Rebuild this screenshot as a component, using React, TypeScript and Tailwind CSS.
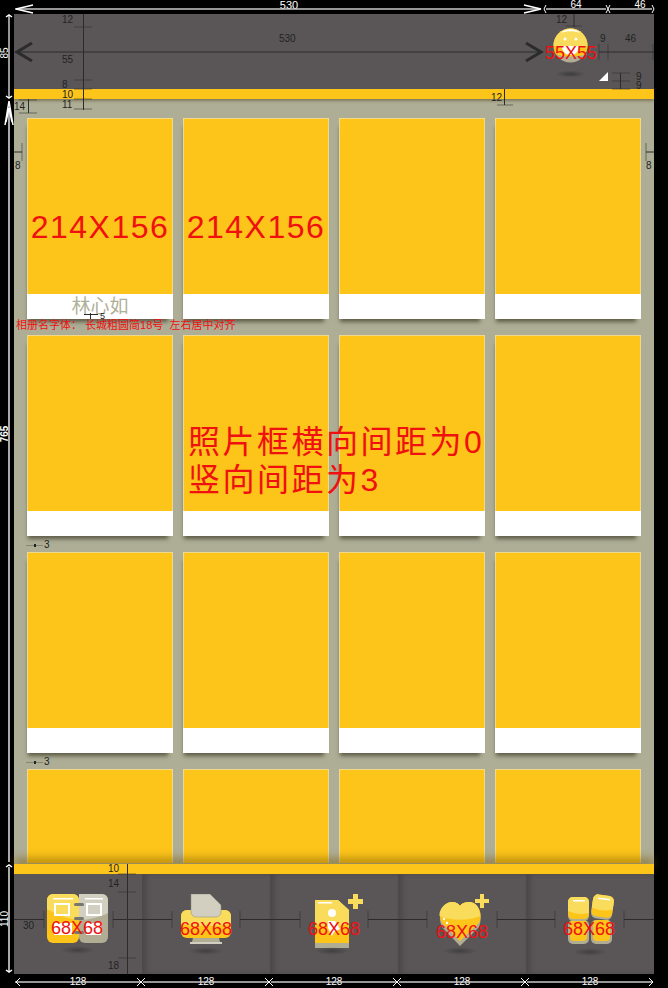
import React from 'react';

const font = '[font-family:"Liberation_Sans","Noto_Sans_CJK_SC",sans-serif]';
const red = 'text-[#f01010]';

const Card: React.FC<{ name?: string; size?: boolean; short?: boolean }> = ({ name, size, short }) => (
  <div className={`w-[146px] shrink-0 ${short ? 'h-[94px]' : 'h-[201px] shadow-[-2px_6px_4px_-3px_rgba(70,65,45,0.75)]'}`}>
    <div
      className={`bg-[#fdc41a] border border-[#f0d98a] border-b-0 flex items-center justify-center pt-[40px] ${
        short ? 'h-[94px]' : 'h-[176px]'
      }`}
    >
      {size && <span className={`text-[32px] leading-none tracking-[1.500px] ${red}`}>214X156</span>}
    </div>
    {!short && (
      <div className="h-[25px] bg-white flex items-center justify-center text-[19px] leading-none text-[#b0b098]">
        {name}
      </div>
    )}
  </div>
);

const Label: React.FC<{ className: string; children: React.ReactNode }> = ({ className, children }) => (
  <span className={`absolute z-20 whitespace-nowrap leading-none ${className}`}>{children}</span>
);

const SideLabel: React.FC<{ className: string; bold?: boolean; text: string }> = ({ className, bold, text }) => (
  <div className={`flex items-center justify-center pr-[4px] ${className}`}>
    <span className={`-rotate-90 text-[10px] leading-none text-white ${bold ? 'font-bold' : ''}`}>{text}</span>
  </div>
);

const GapMark: React.FC = () => (
  <div className="h-[16px] flex items-center gap-[1px] -ml-[1px] pt-[2px]">
    <span className="w-[17px] h-px bg-[#86866f] flex justify-center items-center">
      <span className="w-[2px] h-[3px] bg-[#222]" />
    </span>
    <span className="text-[10px] leading-none text-[#222]">3</span>
  </div>
);

// dimension lines drawn on top of the mockup
const Guides: React.FC = () => (
  <svg className="absolute z-20 left-0 top-0 pointer-events-none" width="668" height="988" fill="none">
    <g stroke="#c8c8c8" strokeWidth="1.5">
      <path d="M15 9H540M546 9H606M610 9H652" />
      <path d="M9 15V97" />
      <path d="M15 982H141M143 982H269M271 982H397M399 982H525M527 982H652" />
    </g>
    <path d="M9 110V862M9 867V972" stroke="#aaa" strokeWidth="2" />
    <g stroke="#fff" strokeWidth="1.5">
      <path d="M33 5L16 9L33 13M524 5L541 9L524 13" />
      <path d="M5 125L9 101L13 125M6 122L9 108L12 122" />
      <path d="M6 17L9 15L12 17M6 96L9 98L12 96M6 867L9 865L12 867M6 970L9 972L12 970" />
      <path d="M546 5L544 9L546 13M606 5L608 9L606 13M610 5L608 9L610 13M652 5L654 9L652 13" strokeWidth="1" />
      <path d="M20 978L16 982L20 986M137 978L141 982L137 986M145 978L141 982L145 986M265 978L269 982L265 986M273 978L269 982L273 986M393 978L397 982L393 986M401 978L397 982L401 986M521 978L525 982L521 986M529 978L525 982L529 986M649 978L653 982L649 986" strokeWidth="1" />
    </g>
    <g stroke="#2b2b2b" strokeWidth="1">
      <path d="M83.500 14V110" />
      <path d="M74 27H92M74 80H92M74 89H92M74 99H92M74 109H92" strokeOpacity="0.55" />
      <path d="M15 52H543M599 52H654" />
      <path d="M599 44V60M608 44V60M653 44V60" strokeOpacity="0.55" />
      <path d="M28.500 99V113" />
      <path d="M19 100H37M19 113H37" strokeOpacity="0.55" />
      <path d="M574 14V27M504.500 89V105M620.500 73V89" />
      <path d="M566 26H582M497 105H513M612 73H630M612 81H630M612 89H630" strokeOpacity="0.55" />
      <path d="M14 152H22M646 152H654" />
      <path d="M22 143V161M646 143V161" strokeOpacity="0.55" />
      <path d="M14 919.500H44M113 919.500H172M240 919.500H300M368 919.500H427M497 919.500H555M624 919.500H654" />
      <path d="M44 911V928M113 911V928M172 911V928M240 911V928M300 911V928M368 911V928M427 911V928M497 911V928M555 911V928M624 911V928" strokeOpacity="0.55" />
      <path d="M127.500 864V974" />
      <path d="M118 892H136M118 958H136M118 874H136" strokeOpacity="0.55" />
      <path d="M84 314.500H98M90.500 313V319" />
    </g>
    <path d="M32 43L17 52L32 61M526 43L541 52L526 61" stroke="#2b2b2b" strokeWidth="3" />
  </svg>
);

const Smiley: React.FC = () => (
  <svg width="55" height="70" viewBox="0 0 55 70" className="block">
    <defs>
      <radialGradient id="shadowTop">
        <stop offset="0" stopColor="#222" stopOpacity="0.5" />
        <stop offset="1" stopColor="#222" stopOpacity="0" />
      </radialGradient>
    </defs>
    <circle cx="27.500" cy="27.500" r="17" fill="#b0ad94" />
    <path d="M10.500 27.500A17 17 0 0 1 44.500 27.500C44.500 31 43.500 34 42 36.500C36 39 19 39 13 36.500C11.500 34 10.500 31 10.500 27.500Z" fill="#fdc41a" />
    <path d="M10.500 27.500A17 17 0 0 1 44.500 27.500C38 32 17 32 10.500 27.500Z" fill="#f9dc5c" />
    <path d="M18 15C22 10 33 10 37 15C32 12.500 23 12.500 18 15Z" fill="#fff" />
    <circle cx="22" cy="21" r="1.500" fill="#fff" />
    <circle cx="33" cy="21" r="1.500" fill="#fff" />
    <path d="M19 28H36C36 34 32 37 27.500 37C23 37 19 34 19 28Z" fill="#fff" />
    <ellipse cx="27.500" cy="56" rx="15" ry="3.500" fill="url(#shadowTop)" />
  </svg>
);

const Shadow: React.FC<{ id: string; cx: number; cy: number }> = ({ id, cx, cy }) => (
  <>
    <defs>
      <radialGradient id={id}>
        <stop offset="0" stopColor="#222" stopOpacity="0.45" />
        <stop offset="1" stopColor="#222" stopOpacity="0" />
      </radialGradient>
    </defs>
    <ellipse cx={cx} cy={cy} rx="17" ry="4" fill={`url(#${id})`} />
  </>
);

const AlbumIcon: React.FC = () => (
  <svg width="68" height="68" viewBox="0 0 68 68">
    <rect x="1" y="0" width="32" height="49" rx="6" fill="#fdc41a" />
    <path d="M1 6a6 6 0 0 1 6-6h20a6 6 0 0 1 6 6v20c-12-1-24-6-32-11Z" fill="#f9dc5c" />
    <rect x="33" y="0" width="29" height="49" rx="6" fill="#b0ad94" />
    <path d="M33 0h23a6 6 0 0 1 6 6v13c-8 4-19 7-29 7Z" fill="#d2cfc0" />
    <rect x="7" y="4" width="20" height="1.500" fill="#fff" />
    <rect x="39" y="4" width="18" height="1.500" fill="#fff" />
    <rect x="9" y="10" width="14" height="11" fill="none" stroke="#fff" strokeWidth="2" />
    <rect x="41" y="10" width="14" height="11" fill="none" stroke="#fff" strokeWidth="2" />
    <rect x="8" y="29" width="18" height="12" fill="#fff" />
    <rect x="40" y="29" width="15" height="12" fill="#fff" />
    <rect x="28" y="9" width="10" height="3" rx="1.500" fill="#77776e" />
    <rect x="28" y="23" width="10" height="3" rx="1.500" fill="#77776e" />
    <rect x="28" y="37" width="10" height="3" rx="1.500" fill="#77776e" />
    <Shadow id="s1" cx={32} cy={56} />
  </svg>
);

const PrinterIcon: React.FC = () => (
  <svg width="68" height="68" viewBox="0 0 68 68">
    <rect x="9" y="16" width="50" height="28" rx="6" fill="#fdc41a" />
    <path d="M9 22a6 6 0 0 1 6-6h38a6 6 0 0 1 6 6v8c-16 3-34 3-50 0Z" fill="#f9dc5c" />
    <path d="M21 44H47L48 48H20Z" fill="#b0ad94" />
    <rect x="18" y="48" width="32" height="2" fill="#d2cfc0" />
    <path d="M19 0H38L49 11V18a5 5 0 0 1-5 5H24a5 5 0 0 1-5-5Z" fill="#d2cfc0" stroke="#8a8878" strokeWidth="0.500" />
    <Shadow id="s2" cx={34} cy={57} />
  </svg>
);

const AddPhotoIcon: React.FC = () => (
  <svg width="68" height="68" viewBox="0 0 68 68">
    <path d="M2 6H25L36 16V54H2Z" fill="#fdc41a" />
    <path d="M2 6H25L36 16V29C26 34 12 33 2 30Z" fill="#f9dc5c" />
    <rect x="2" y="49" width="34" height="5" fill="#b0ad94" />
    <rect x="5" y="8" width="14" height="1.500" fill="#fff" />
    <circle cx="19" cy="19" r="4" fill="#fff" />
    <path d="M15 27H22L27 35L21 38L19 42L15 34Z" fill="#fff" />
    <path d="M35 5H40V0H45V5H50V10H45V15H40V10H35Z" fill="#f9dc5c" />
    <Shadow id="s3" cx={19} cy={57} />
  </svg>
);

const HeartIcon: React.FC = () => (
  <svg width="68" height="68" viewBox="0 0 68 68">
    <path d="M21 52L3 33C-3 20 5 8 13 8C17 8 20 10 21 12C23 9 26 8 30 8C38 8 45 19 40 33Z" fill="#b0ad94" />
    <path d="M21 47L3 29C-3 18 6 8 13 8C17 8 20 10 21 12C23 9 26 8 30 8C38 8 45 18 40 29Z" fill="#fdc41a" />
    <path d="M0.500 22C0 14 7 8 13 8C17 8 20 10 21 12C23 9 26 8 30 8C37 8 41 14 41 22C30 27 12 27 0.500 22Z" fill="#f9dc5c" />
    <circle cx="5" cy="25" r="1.200" fill="#fff" />
    <circle cx="8" cy="29" r="1.200" fill="#fff" />
    <circle cx="11" cy="32" r="1.200" fill="#fff" />
    <path d="M36 5H41V0H45V5H50V9H45V14H41V9H36Z" fill="#f9dc5c" />
    <Shadow id="s4" cx={21} cy={57} />
  </svg>
);

const GridIcon: React.FC = () => (
  <svg width="68" height="68" viewBox="0 0 68 68">
    <rect x="2" y="26" width="21" height="24" rx="5" fill="#b0ad94" />
    <rect x="25" y="26" width="21" height="24" rx="5" fill="#b0ad94" />
    <rect x="4" y="26" width="17" height="21" rx="4" fill="#fdc41a" />
    <rect x="27" y="26" width="17" height="21" rx="4" fill="#fdc41a" />
    <rect x="2" y="3" width="21" height="24" rx="5" fill="#b0ad94" />
    <rect x="2" y="3" width="21" height="22" rx="5" fill="#fdc41a" />
    <path d="M2 8a5 5 0 0 1 5-5h11a5 5 0 0 1 5 5v11c-7 2-14 1-21-2Z" fill="#f9dc5c" />
    <rect x="7" y="6" width="12" height="1.500" fill="#fff" />
    <g transform="rotate(8 36 13)">
      <rect x="26" y="2" width="21" height="23" rx="5" fill="#b0ad94" />
      <rect x="26" y="1" width="21" height="22" rx="5" fill="#fdc41a" />
      <path d="M26 6a5 5 0 0 1 5-5h11a5 5 0 0 1 5 5v8c-7 3-14 3-21 1Z" fill="#f9dc5c" />
      <rect x="31" y="4" width="12" height="1.500" fill="#fff" />
    </g>
    <Shadow id="s5" cx={24} cy={58} />
  </svg>
);

const tabs = [
  { icon: <AlbumIcon />, offset: 'pl-[32px]', cut: false, left: 'left-[5px]', top: 'top-[25px]' },
  { icon: <PrinterIcon />, offset: 'pl-[28px]', cut: true, left: 'left-[8px]', top: 'top-[26px]' },
  { icon: <AddPhotoIcon />, offset: 'pl-[41px]', cut: true, left: 'left-[-5px]', top: 'top-[26px]' },
  { icon: <HeartIcon />, offset: 'pl-[39px]', cut: true, left: 'left-[-3px]', top: 'top-[29px]' },
  { icon: <GridIcon />, offset: 'pl-[38px]', cut: true, left: 'left-[-3px]', top: 'top-[26px]' },
];

const rows = [0, 1, 2];

export default function App() {
  return (
    <div className={`relative w-[668px] h-[988px] bg-black overflow-hidden flex flex-col ${font}`}>
      {/* top ruler */}
      <div className="h-[14px] ml-[14px] flex text-[10px] leading-none text-white">
        <div className="w-[530px] pl-[20px] text-center text-[11px]">530</div>
        <div className="w-[64px] text-center">64</div>
        <div className="w-[46px] pl-[18px] text-center">46</div>
      </div>

      <div className="flex h-[960px]">
        {/* left ruler */}
        <div className="w-[14px] flex flex-col">
          <SideLabel className="h-[85px] pb-[7px]" text="85" />
          <SideLabel className="h-[765px] pb-[96px]" bold text="765" />
          <SideLabel className="h-[110px]" text="110" />
        </div>

        <div className="w-[640px] flex flex-col">
          {/* top bar */}
          <div className="h-[75px] bg-[#5a5658] flex justify-end relative">
            <div className="relative mr-[56px] mt-[4px] h-[70px]">
              <Smiley />
              <span className={`absolute left-[2px] top-[26px] text-[18px] leading-none ${red}`}>55X55</span>
            </div>
            <div className="absolute right-[46px] top-[58px] w-0 h-0 border-l-[9px] border-l-transparent border-b-[9px] border-b-white" />
          </div>
          <div className="h-[10px] bg-[#fdc41a] shadow-[0_2px_3px_rgba(70,60,20,0.45)] z-10" />

          {/* album grid */}
          <div className="h-[765px] bg-[#aeae96] pt-[19px] pl-[13px] overflow-hidden flex flex-col relative">
            {rows.map((row) => (
              <React.Fragment key={row}>
                <div className="flex gap-[10px]">
                  <Card name={row === 0 ? '林心如' : ''} size={row === 0} />
                  <Card size={row === 0} />
                  <Card />
                  <Card />
                </div>
                {row === 0 ? (
                  <div className={`h-[16px] -ml-[11px] pt-[1px] text-[11px] leading-none whitespace-nowrap ${red}`}>
                    相册名字体： 长城粗圆简18号&nbsp; 左右居中对齐
                  </div>
                ) : (
                  <GapMark />
                )}
              </React.Fragment>
            ))}
            <div className="flex gap-[10px]">
              <Card short />
              <Card short />
              <Card short />
              <Card short />
            </div>
            <div className={`absolute left-[174px] top-[324px] text-[32px] leading-[38px] tracking-[2.500px] whitespace-nowrap ${red}`}>
              <p>照片框横向间距为0</p>
              <p>竖向间距为3</p>
            </div>
          </div>

          {/* bottom tabs */}
          <div className="h-[10px] bg-[#fdc41a] shadow-[0_-6px_8px_rgba(120,85,0,0.5)] z-10" />
          <div className="h-[100px] bg-[#5a5658] flex overflow-hidden">
            {tabs.map((tab, i) => (
              <div
                key={i}
                className={`w-[128px] shrink-0 h-full pt-[20px] ${tab.offset} ${
                  tab.cut ? 'border-l-2 border-l-[#4c4947] shadow-[inset_3px_0_4px_rgba(40,40,40,0.25)]' : ''
                }`}
              >
                <div className="relative w-[68px] h-[68px]">
                  {tab.icon}
                  <span className={`absolute ${tab.left} ${tab.top} text-[18px] leading-none ${red}`}>68X68</span>
                </div>
              </div>
            ))}
          </div>
        </div>
      </div>

      {/* bottom ruler */}
      <div className="h-[14px] ml-[14px] flex pt-[3px] text-[10px] leading-none text-white">
        <div className="w-[128px] text-center">128</div>
        <div className="w-[128px] text-center">128</div>
        <div className="w-[128px] text-center">128</div>
        <div className="w-[128px] text-center">128</div>
        <div className="w-[128px] text-center">128</div>
      </div>

      <Guides />

      {/* dimension numbers that sit on the guide lines */}
      <Label className="left-[279px] top-[34px] text-[10px] text-[#222]">530</Label>
      <Label className="left-[62px] top-[15px] text-[10px] text-[#222]">12</Label>
      <Label className="left-[62px] top-[55px] text-[10px] text-[#222]">55</Label>
      <Label className="left-[62px] top-[80px] text-[10px] text-[#222]">8</Label>
      <Label className="left-[62px] top-[90px] text-[10px] text-[#222]">10</Label>
      <Label className="left-[62px] top-[100px] text-[10px] text-[#222]">11</Label>
      <Label className="left-[14px] top-[102px] text-[10px] text-[#222]">14</Label>
      <Label className="left-[556px] top-[15px] text-[10px] text-[#222]">12</Label>
      <Label className="left-[600px] top-[34px] text-[10px] text-[#222]">9</Label>
      <Label className="left-[625px] top-[34px] text-[10px] text-[#222]">46</Label>
      <Label className="left-[636px] top-[72px] text-[10px] text-[#222]">9</Label>
      <Label className="left-[636px] top-[81px] text-[10px] text-[#222]">9</Label>
      <Label className="left-[491px] top-[93px] text-[10px] text-[#222]">12</Label>
      <Label className="left-[15px] top-[161px] text-[10px] text-[#222]">8</Label>
      <Label className="left-[646px] top-[161px] text-[10px] text-[#222]">8</Label>
      <Label className="left-[100px] top-[312px] text-[9px] text-[#222]">5</Label>
      <Label className="left-[108px] top-[864px] text-[10px] text-[#222]">10</Label>
      <Label className="left-[108px] top-[879px] text-[10px] text-[#222]">14</Label>
      <Label className="left-[108px] top-[961px] text-[10px] text-[#222]">18</Label>
      <Label className="left-[23px] top-[921px] text-[10px] text-[#222]">30</Label>
    </div>
  );
}
